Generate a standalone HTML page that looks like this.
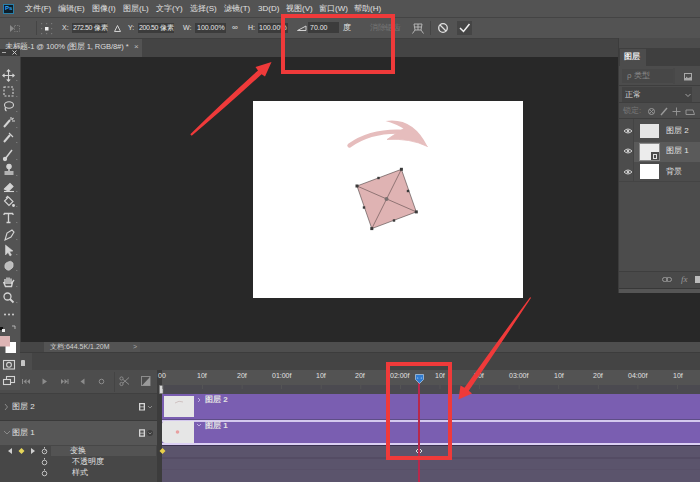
<!DOCTYPE html>
<html><head><meta charset="utf-8">
<style>
*{margin:0;padding:0;box-sizing:border-box}
html,body{width:700px;height:482px;overflow:hidden;background:#282828;font-family:"Liberation Sans",sans-serif;color:#d8d8d8}
.a{position:absolute}
.t{position:absolute;white-space:nowrap;font-size:8px;line-height:10px;color:#e2e2e2}
.c{display:inline-block;width:1em;text-align:center}
svg{position:absolute;left:0;top:0;overflow:visible}
</style></head><body>
<!-- menu bar -->
<div class="a" style="left:0;top:0;width:700px;height:17px;background:#535353"></div>
<div class="a" style="left:0;top:17px;width:700px;height:1px;background:#444"></div>
<div class="a" style="left:3px;top:4px;width:11px;height:10px;background:#0c1e2a;border:1px solid #2a7fa8"></div>
<div class="t" style="left:5px;top:4px;font-size:6px;line-height:8px;color:#31a8ff;font-weight:bold">Ps</div>
<div class="t" style="left:25px;top:4px"><span class="c">文</span><span class="c">件</span>(F)</div>
<div class="t" style="left:58px;top:4px"><span class="c">编</span><span class="c">辑</span>(E)</div>
<div class="t" style="left:92px;top:4px"><span class="c">图</span><span class="c">像</span>(I)</div>
<div class="t" style="left:123px;top:4px"><span class="c">图</span><span class="c">层</span>(L)</div>
<div class="t" style="left:156px;top:4px"><span class="c">文</span><span class="c">字</span>(Y)</div>
<div class="t" style="left:190px;top:4px"><span class="c">选</span><span class="c">择</span>(S)</div>
<div class="t" style="left:224px;top:4px"><span class="c">滤</span><span class="c">镜</span>(T)</div>
<div class="t" style="left:258px;top:4px">3D(D)</div>
<div class="t" style="left:286px;top:4px"><span class="c">视</span><span class="c">图</span>(V)</div>
<div class="t" style="left:319px;top:4px"><span class="c">窗</span><span class="c">口</span>(W)</div>
<div class="t" style="left:354px;top:4px"><span class="c">帮</span><span class="c">助</span>(H)</div>
<!-- options bar -->
<div class="a" style="left:0;top:18px;width:700px;height:20px;background:#535353"></div>
<div class="a" style="left:0;top:38px;width:700px;height:1px;background:#3f3f3f"></div>
<div class="a" style="left:36px;top:21px;width:1px;height:14px;background:#454545"></div>
<svg width="700" height="482"><path d="M10,25 L14,28.5 L10,32 Z" fill="#8a8a8a"/><rect x="14.5" y="25.5" width="5" height="6" fill="none" stroke="#777" stroke-width="1" stroke-dasharray="1.5 1"/></svg>
<svg width="700" height="482"><g fill="#7a7a7a"><rect x="41" y="23" width="1.2" height="1.2"/><rect x="46" y="23" width="1.2" height="1.2"/><rect x="51" y="23" width="1.2" height="1.2"/><rect x="41" y="28" width="1.2" height="1.2"/><rect x="51" y="28" width="1.2" height="1.2"/><rect x="41" y="33" width="1.2" height="1.2"/><rect x="46" y="33" width="1.2" height="1.2"/><rect x="51" y="33" width="1.2" height="1.2"/></g><rect x="45" y="27" width="3.5" height="3.5" fill="#eeeeee"/></svg>
<div class="t" style="left:62px;top:23px;font-size:7px">X:</div>
<div class="a" style="left:72px;top:23px;width:35px;height:10px;background:#3c3c3c"></div>
<div class="t" style="left:73px;top:23px;color:#e8e8e8;font-size:7px;letter-spacing:-0.4px">272.50 <span class="c">像</span><span class="c">素</span></div>
<svg width="700" height="482"><path d="M114.5,31.5 L117.5,25.5 L120.5,31.5 Z" fill="none" stroke="#cfcfcf" stroke-width="1"/></svg>
<div class="t" style="left:128px;top:23px;font-size:7px">Y:</div>
<div class="a" style="left:138px;top:23px;width:36px;height:10px;background:#3c3c3c"></div>
<div class="t" style="left:139px;top:23px;color:#e8e8e8;font-size:7px;letter-spacing:-0.4px">200.50 <span class="c">像</span><span class="c">素</span></div>
<div class="t" style="left:183px;top:23px;font-size:7px">W:</div>
<div class="a" style="left:195px;top:23px;width:31px;height:10px;background:#3c3c3c"></div>
<div class="t" style="left:197px;top:23px;color:#e8e8e8;font-size:7px">100.00%</div>
<div class="t" style="left:232px;top:23px">∞</div>
<div class="t" style="left:248px;top:23px;font-size:7px">H:</div>
<div class="a" style="left:258px;top:23px;width:30px;height:10px;background:#3c3c3c"></div>
<div class="t" style="left:259px;top:23px;color:#e8e8e8;font-size:7px">100.00%</div>
<div class="a" style="left:308px;top:22px;width:31px;height:11px;background:#3c3c3c"></div>
<div class="t" style="left:310px;top:23px;color:#e8e8e8;font-size:7px">70.00</div>
<div class="t" style="left:343px;top:23px"><span class="c">度</span></div>
<div class="t" style="left:370px;top:23px;color:#737373;font-size:7.5px;letter-spacing:0.3px"><span class="c">消</span><span class="c">除</span><span class="c">锯</span><span class="c">齿</span></div>
<div class="a" style="left:430px;top:21px;width:1px;height:14px;background:#454545"></div>
<div class="a" style="left:457px;top:21px;width:15px;height:14px;background:#454545"></div>
<svg width="700" height="482">
  <path d="M297.5,30.5 L306,30.5 L306,26 Z" fill="none" stroke="#d0d0d0" stroke-width="1"/>
  <path d="M414,24 h8 l-1,6 h-6 z M414.5,27 h7 M418,24 v6 M415,30 l-2.5,3.5 M421,30 l2.5,3.5" fill="none" stroke="#bdbdbd" stroke-width="0.9"/>
  <circle cx="443" cy="28" r="4.3" fill="none" stroke="#e0e0e0" stroke-width="1.3"/>
  <path d="M440,25 L446,31" stroke="#e0e0e0" stroke-width="1.3"/>
  <path d="M460,28 L463.5,31.5 L469.5,24" fill="none" stroke="#f0f0f0" stroke-width="1.5"/>
</svg>
<!-- tab bar -->
<div class="a" style="left:0;top:39px;width:700px;height:18px;background:#444444"></div>
<div class="a" style="left:0;top:39px;width:142px;height:18px;background:#535353"></div>
<div class="t" style="left:5px;top:42px;color:#dcdcdc;font-size:7.6px;letter-spacing:-0.1px"><span class="c">未</span><span class="c">标</span><span class="c">题</span>-1 @ 100% (<span class="c">图</span><span class="c">层</span> 1, RGB/8#) *</div>
<div class="t" style="left:134px;top:42px;color:#bdbdbd">×</div>
<!-- toolbar -->
<div class="a" style="left:0;top:49px;width:20px;height:7px;background:#3a3a3a"></div>
<svg width="700" height="482"><path d="M2,52.5 h4" stroke="#aaa" stroke-width="1"/><path d="M12.5,50.5 l4,4 M16.5,50.5 l-4,4" stroke="#c8c8c8" stroke-width="1"/></svg>
<div class="a" style="left:0;top:56px;width:20px;height:334px;background:#535353"></div>
<div class="a" style="left:20px;top:57px;width:1px;height:334px;background:#3e3e3e"></div>
<svg width="700" height="482">
 <g fill="none" stroke="#d4d4d4" stroke-width="1.1">
  <!-- move -->
  <path d="M8.5,70 v11 M3,75.5 h11"/>
  <path d="M6.8,71.6 L8.5,69.8 L10.2,71.6 M6.8,79.4 L8.5,81.2 L10.2,79.4 M4.6,73.8 L2.8,75.5 L4.6,77.2 M12.4,73.8 L14.2,75.5 L12.4,77.2"/>
  <!-- marquee -->
  <rect x="4" y="87" width="9" height="9" stroke-dasharray="2 1.5"/>
  <!-- lasso -->
  <ellipse cx="9" cy="105" rx="4.5" ry="3.2"/>
  <path d="M5.5,107 q-1,3 1,4"/>
  <!-- quick select -->
  <path d="M4,127 L10,120" stroke-width="2"/>
  <path d="M11,117 v3 M12,121 h3 M13.5,118 l-1.5,1.5"/>
  <!-- eyedropper -->
  <path d="M4,142 L10,135" stroke-width="2"/>
  <path d="M9,133 L13,137"/>
  <!-- brush -->
  <path d="M5,159 L12,150" stroke-width="1.5"/>
  <circle cx="5" cy="159" r="1.6" fill="#d4d4d4"/>
  <!-- stamp -->
  <circle cx="9" cy="166.5" r="2.2" fill="#d4d4d4"/>
  <path d="M9,168 v3 M4.5,172 h9 M4.5,174 h9" stroke-width="1.5"/>
  <!-- eraser -->
  <path d="M4.5,189 L10,183.5 L13,186.5 L8.5,191 Z" fill="#d4d4d4"/>
  <path d="M4,191.5 h10"/>
  <!-- bucket -->
  <path d="M4.5,201 L8.5,197 L13,201.5 L9,205.5 Z"/>
  <path d="M6,198 l2,-2" />
  <circle cx="13.5" cy="205.5" r="0.9" fill="#d4d4d4"/>
  <!-- T -->
  <path d="M4,213.5 h9 M8.5,213.5 v9 M6.5,222.5 h4 M4,213.5 v1.5 M13,213.5 v1.5" stroke-width="1.3"/>
  <!-- pen -->
  <path d="M5,240 L7,233 L12,230 L14,232 L11,237 Z"/>
  <!-- path select arrow -->
  <path d="M5.5,245 L5.5,255 L8,252.5 L10,256 L11.5,255 L9.5,251.5 L13,251 Z" fill="#d4d4d4" stroke-width="0.5"/>
  <!-- custom shape -->
  <path d="M5,268 Q4,263 8,262 Q11,260 13,263 Q14,268 11,269 Q8,272 5,268 Z" fill="#bdbdbd" stroke-width="0.6"/>
  <!-- hand -->
  <path d="M5,284 L5,279 M7,284 L7,277.5 M9,284 L9,277.5 M11,284 L11,278.5 M3.5,282 L5.5,286.5 L11.5,286.5 L12.5,282 L14,280" stroke-width="1.4"/>
  <!-- zoom -->
  <circle cx="7.5" cy="296.5" r="3.5" stroke-width="1.3"/>
  <path d="M10,299 L13.5,302.5" stroke-width="1.8"/>
  <!-- quick mask -->
  <rect x="3.5" y="360.5" width="11" height="8.5"/>
  <circle cx="9" cy="364.8" r="2.4"/>
  <!-- screen mode -->
  <rect x="6.5" y="376.5" width="8" height="6"/>
  <rect x="3.5" y="379.5" width="7" height="5" fill="#535353"/>
 </g>
 <g fill="#d4d4d4">
  <circle cx="5" cy="314.5" r="1"/><circle cx="9" cy="314.5" r="1"/><circle cx="13" cy="314.5" r="1"/>
  <rect x="0" y="327" width="3" height="3" fill="#111"/>
  <rect x="2" y="329" width="3" height="3" fill="#eee"/>
  <path d="M12,326 l3,0 l0,3" fill="none" stroke="#ccc" stroke-width="0.8"/>
  <rect x="5.5" y="342" width="10.5" height="11" fill="#ffffff"/>
  <rect x="0" y="336" width="10" height="10.5" fill="#ddb5b5"/>
 </g>
 <g fill="#9a9a9a">
  <path d="M16,80 l1.2,0 l0,1.2 z M16,96 l1.2,0 l0,1.2 z M16,111 l1.2,0 l0,1.2 z M16,127 l1.2,0 l0,1.2 z M16,142 l1.2,0 l0,1.2 z M16,159 l1.2,0 l0,1.2 z M16,175 l1.2,0 l0,1.2 z M16,191 l1.2,0 l0,1.2 z M16,206 l1.2,0 l0,1.2 z M16,222 l1.2,0 l0,1.2 z M16,239 l1.2,0 l0,1.2 z M16,254 l1.2,0 l0,1.2 z M16,270 l1.2,0 l0,1.2 z M16,286 l1.2,0 l0,1.2 z M16,302 l1.2,0 l0,1.2 z"/>
 </g>
</svg>
<!-- canvas -->
<div class="a" style="left:253px;top:101px;width:270px;height:197px;background:#ffffff"></div>
<svg width="700" height="482">
  <path d="M349.5,145.5 Q372,129.5 406,132" fill="none" stroke="#e6bdbd" stroke-width="4.4" stroke-linecap="round"/>
  <path d="M385.5,121 Q413,117 427.5,146.5 Q405.5,126.2 385.5,121 Z" fill="#e6bdbd"/><path d="M387,139.5 L406,127 L427.5,146.5 Q410,138 387,139.5 Z" fill="#e6bdbd" stroke="#e6bdbd" stroke-width="0.8" stroke-linejoin="round"/>
  <path d="M401.4,169.3 L416.3,211.9 L371.8,228.6 L357,186 Z" fill="#dfb3b3" stroke="#4a4040" stroke-width="0.6"/>
  <path d="M401.4,169.3 L371.8,228.6 M357,186 L416.3,211.9" stroke="#5a4a4a" stroke-width="0.6"/>
  <circle cx="386.5" cy="199" r="2" fill="#7a7070"/>
  <g fill="#3a3a3a">
    <rect x="399.9" y="167.8" width="3" height="3"/>
    <rect x="414.8" y="210.4" width="3" height="3"/>
    <rect x="370.3" y="227.1" width="3" height="3"/>
    <rect x="355.5" y="184.5" width="3" height="3"/>
    <rect x="377.3" y="176.8" width="2.4" height="2.4"/>
    <rect x="406.8" y="189.8" width="2.4" height="2.4"/>
    <rect x="392.8" y="219.3" width="2.4" height="2.4"/>
    <rect x="362.8" y="206.3" width="2.4" height="2.4"/>
  </g>
</svg>
<!-- layers panel column -->
<div class="a" style="left:618px;top:38px;width:82px;height:255px;background:#4c4c4c"></div>
<div class="a" style="left:618px;top:38px;width:1px;height:255px;background:#3c3c3c"></div>
<div class="a" style="left:619px;top:48px;width:81px;height:18px;background:#3f3f3f"></div>
<div class="a" style="left:620px;top:49px;width:26px;height:17px;background:#4c4c4c"></div>
<div class="t" style="left:624px;top:52px;color:#eeeeee;font-weight:bold"><span class="c">图</span><span class="c">层</span></div>
<div class="a" style="left:622px;top:69px;width:51px;height:14px;background:#474747"></div>
<div class="t" style="left:627px;top:71px;color:#8a8a8a">ρ <span class="c">类</span><span class="c">型</span></div>
<div class="a" style="left:619px;top:85px;width:81px;height:1px;background:#3e3e3e"></div>
<div class="a" style="left:622px;top:87px;width:70px;height:15px;background:#424242"></div>
<div class="t" style="left:625px;top:90px;color:#d8d8d8"><span class="c">正</span><span class="c">常</span></div>
<svg width="700" height="482"><path d="M685.5,94 l2.5,2.5 l2.5,-2.5" fill="none" stroke="#aaa" stroke-width="0.9"/></svg>
<div class="a" style="left:619px;top:102px;width:81px;height:1px;background:#3e3e3e"></div>
<div class="t" style="left:623px;top:106px;color:#777"><span class="c">锁</span><span class="c">定</span>:</div>
<div class="a" style="left:619px;top:118px;width:81px;height:1px;background:#3e3e3e"></div>
<div class="a" style="left:634px;top:142px;width:66px;height:20px;background:#5a5a5a"></div>
<div class="a" style="left:640px;top:124px;width:19px;height:14px;background:#e4e4e4"></div>
<div class="a" style="left:639px;top:143px;width:21px;height:18px;background:#ececec;border:1px solid #8a8a8a"></div>
<div class="a" style="left:651px;top:152px;width:8px;height:8px;background:#4a4a4a"></div>
<div class="a" style="left:653px;top:154px;width:4px;height:5px;border:1px solid #e0e0e0"></div>
<div class="a" style="left:640px;top:164px;width:19px;height:15px;background:#ffffff"></div>
<div class="t" style="left:666px;top:126px"><span class="c">图</span><span class="c">层</span> 2</div>
<div class="t" style="left:666px;top:146px"><span class="c">图</span><span class="c">层</span> 1</div>
<div class="t" style="left:666px;top:167px"><span class="c">背</span><span class="c">景</span></div>
<div class="a" style="left:619px;top:181px;width:81px;height:1px;background:#444"></div>
<div class="a" style="left:633px;top:119px;width:1px;height:62px;background:#444"></div>
<svg width="700" height="482">
 <g fill="none" stroke="#cfcfcf" stroke-width="1">
  <path d="M624,131 Q628,127 632,131 Q628,135 624,131 Z"/>
  <path d="M624,151 Q628,147 632,151 Q628,155 624,151 Z"/>
  <path d="M624,172 Q628,168 632,172 Q628,176 624,172 Z"/>
  <rect x="684.5" y="73.5" width="7" height="6.5" stroke="#a8a8a8"/>
  <path d="M685,78 h6 v2 h-6 z M686,76.5 l2,1.5 l3,-1 v2 h-5 z" fill="#a8a8a8" stroke="none"/>
  <path d="M674,68 v16" stroke="#444"/>
  <path d="M661,115 L667,108" stroke="#9a9a9a" stroke-width="1.4"/>
  <path d="M676.5,107.5 v8 M672.5,111.5 h8" stroke="#9a9a9a" stroke-width="0.9"/>
  <path d="M686,110 h7 l1.5,4.5 h-8.5 z" stroke="#9a9a9a" stroke-width="0.9"/>
  <circle cx="651.5" cy="111.5" r="3" stroke="#9a9a9a"/><path d="M649.5,109.5 l4,4 M653.5,109.5 l-4,4" stroke="#9a9a9a" stroke-width="0.8"/>
 </g>
 <g fill="#cfcfcf"><circle cx="628" cy="131" r="1.3"/><circle cx="628" cy="151" r="1.3"/><circle cx="628" cy="172" r="1.3"/></g>
</svg>
<div class="a" style="left:619px;top:271px;width:81px;height:1px;background:#3e3e3e"></div>
<div class="a" style="left:619px;top:272px;width:81px;height:16px;background:#494949"></div>
<div class="a" style="left:619px;top:288px;width:81px;height:1px;background:#383838"></div>
<div class="a" style="left:619px;top:289px;width:81px;height:4px;background:#555"></div>
<svg width="700" height="482"><rect x="662.5" y="277.5" width="5" height="4" rx="2" fill="none" stroke="#9a9a9a" stroke-width="1"/><rect x="666.5" y="277.5" width="5" height="4" rx="2" fill="none" stroke="#9a9a9a" stroke-width="1"/></svg>
<div class="t" style="left:681px;top:274px;color:#9a9a9a;font-style:italic;font-family:'Liberation Serif',serif;font-size:9px">fx</div>
<div class="a" style="left:695px;top:276px;width:5px;height:7px;background:#bbb"></div>
<!-- status bar -->
<div class="a" style="left:20px;top:342px;width:680px;height:10px;background:#4e4e4e"></div>
<div class="a" style="left:20px;top:342px;width:24px;height:10px;background:#464646"></div>
<div class="a" style="left:44px;top:342px;width:96px;height:10px;background:#535353"></div>
<div class="t" style="left:50px;top:342px;font-size:7px;color:#d0d0d0"><span class="c">文</span><span class="c">档</span>:644.5K/1.20M</div>
<div class="t" style="left:133px;top:342px;font-size:7px;color:#aaa">&gt;</div>
<div class="a" style="left:20px;top:352px;width:680px;height:1px;background:#3c3c3c"></div>
<!-- timeline tab bar -->
<div class="a" style="left:20px;top:353px;width:680px;height:17px;background:#444444"></div>
<div class="a" style="left:20px;top:353px;width:12px;height:17px;background:#4c4c4c"></div>
<div class="a" style="left:21px;top:360px;width:4px;height:6px;background:#c4c4c4;border-radius:1px 1px 0 0"></div>
<!-- controls row -->
<div class="a" style="left:20px;top:370px;width:137px;height:23px;background:#4d4d4d"></div>
<div class="a" style="left:114px;top:372px;width:1px;height:20px;background:#444"></div>
<!-- gutter -->
<div class="a" style="left:157px;top:370px;width:5px;height:112px;background:#3c3c3c"></div>
<!-- ruler -->
<div class="a" style="left:162px;top:370px;width:538px;height:15px;background:#535353"></div>
<div class="a" style="left:162px;top:385px;width:538px;height:9px;background:#4b4a50"></div>
<!-- layer rows -->
<div class="a" style="left:0;top:390px;width:20px;height:3px;background:#4c4c4c"></div>
<div class="a" style="left:0;top:393px;width:157px;height:1px;background:#404040"></div>
<div class="a" style="left:0;top:394px;width:157px;height:26px;background:#474747"></div>
<div class="a" style="left:0;top:420px;width:157px;height:1px;background:#3a3a3a"></div>
<div class="a" style="left:0;top:421px;width:157px;height:24px;background:#565656"></div>
<div class="a" style="left:0;top:445px;width:157px;height:37px;background:#474747"></div>
<div class="a" style="left:51px;top:446px;width:105px;height:10px;background:#535353"></div>
<svg width="700" height="482">
 <g fill="#8c8c8c">
  <path d="M23,379 v5 h-1 v-5 z M26.5,379 l-3,2.5 l3,2.5 z M30,379 l-3,2.5 l3,2.5 z"/>
  <path d="M42.5,378.5 l4.5,3 l-4.5,3 z"/>
  <path d="M61,379 l3,2.5 l-3,2.5 z M64.5,379 l3,2.5 l-3,2.5 z M67.5,379 h1 v5 h-1 z"/>
  <path d="M84.5,378.5 l-4,3 l4,3 z"/>
 </g>
 <g fill="none" stroke="#8c8c8c" stroke-width="1">
  <circle cx="101.5" cy="381.5" r="2.3"/>
  <circle cx="121.5" cy="378.5" r="1.6"/><circle cx="121.5" cy="384" r="1.6"/>
  <path d="M123,379.5 L129,384.5 M123,383 L129,377.5"/>
  <rect x="141.5" y="376.5" width="8.5" height="9"/>
 </g>
 <path d="M142,385.5 L150,377 L150,385.5 Z" fill="#9a9a9a"/>
 <g fill="none" stroke="#8a8a8a" stroke-width="1">
  <path d="M5,404 l2.5,3 l-2.5,3"/>
  <path d="M4,431 l3,3 l3,-3"/>
  <path d="M148,406 l2,2 l2,-2"/>
 </g>
 <g fill="#d6d6d6">
  <path d="M139,403 h6 v7.5 h-6 z M140.3,404.3 v2.2 h3.4 v-2.2 z M140.3,407.2 v2.2 h3.4 v-2.2 z" fill-rule="evenodd"/>
  <path d="M139,429.2 h6 v7.5 h-6 z M140.3,430.5 v2.2 h3.4 v-2.2 z M140.3,433.4 v2.2 h3.4 v-2.2 z" fill-rule="evenodd"/>
 </g>
 <circle cx="150" cy="433" r="3" fill="#3e3e3e"/><path d="M148.5,432.5 l1.5,1.5 l1.5,-1.5" fill="none" stroke="#9a9a9a" stroke-width="0.8"/>
 <path d="M8,451 l4,-3 v6 z M35,451 l-4,-3 v6 z" fill="#cfcfcf"/>
 <path d="M21.5,448 l3,3 l-3,3 l-3,-3 z" fill="#e5d55a"/>
 <g fill="none" stroke="#cfcfcf" stroke-width="0.9">
  <circle cx="44.5" cy="451.5" r="2.3"/><path d="M44.5,448.5 v-1.5 M44.5,451.5 l1,-1"/>
  <circle cx="44.5" cy="462.5" r="2.3"/><path d="M44.5,459.5 v-1.5"/>
  <circle cx="44.5" cy="473.5" r="2.3"/><path d="M44.5,470.5 v-1.5"/>
 </g>
</svg>
<div class="t" style="left:12px;top:402px"><span class="c">图</span><span class="c">层</span> 2</div>
<div class="t" style="left:12px;top:428px"><span class="c">图</span><span class="c">层</span> 1</div>
<div class="t" style="left:70px;top:446px"><span class="c">变</span><span class="c">换</span></div>
<div class="t" style="left:72px;top:457px"><span class="c">不</span><span class="c">透</span><span class="c">明</span><span class="c">度</span></div>
<div class="t" style="left:72px;top:468px"><span class="c">样</span><span class="c">式</span></div>
<!-- tracks -->
<div class="a" style="left:162px;top:394px;width:538px;height:25px;background:#7a5eb1"></div>
<div class="a" style="left:162px;top:419px;width:538px;height:1px;background:#5e4e86"></div>
<div class="a" style="left:162px;top:420px;width:538px;height:2px;background:#d4c8ee"></div>
<div class="a" style="left:162px;top:422px;width:538px;height:21px;background:#7a5eb1"></div>
<div class="a" style="left:162px;top:443px;width:538px;height:2px;background:#dcd0f4"></div>
<div class="a" style="left:162px;top:445px;width:538px;height:37px;background:#5b546c"></div>
<div class="a" style="left:164px;top:396px;width:30px;height:21px;background:#e6e6e6"></div>
<div class="a" style="left:162px;top:421px;width:32px;height:22px;background:#e6e6e6;border-radius:3px 0 0 3px"></div>
<div class="a" style="left:162px;top:445px;width:538px;height:1px;background:#3a3150"></div>
<div class="a" style="left:162px;top:457px;width:538px;height:2px;background:#544c64"></div>
<div class="a" style="left:162px;top:469px;width:538px;height:1px;background:#585068"></div>
<svg width="700" height="482">
 <path d="M162.5,448 l3,3 l-3,3 l-3,-3 z" fill="#e8cf4a"/>
 <path d="M419,448 l3,3 l-3,3 l-3,-3 z" fill="none" stroke="#e0e0e0" stroke-width="1"/>
 <rect x="159.5" y="385.5" width="3.5" height="8" fill="#d8d8d8" stroke="#777" stroke-width="0.6"/>
 <path d="M183,402 q-4,-2 -8,1" fill="none" stroke="#c9b9b9" stroke-width="0.8"/>
 <circle cx="177.5" cy="432" r="1.8" fill="#e8a0a0"/>
 <path d="M198,398 l2,2 l-2,2" fill="none" stroke="#c8b8e8" stroke-width="0.9"/>
 <path d="M197,424 l2,2 l2,-2" fill="none" stroke="#c8b8e8" stroke-width="0.9"/>
 <g fill="#575757"><rect x="162.5" y="385" width="0.8" height="4"/><rect x="202.1" y="385" width="0.8" height="4"/><rect x="241.7" y="385" width="0.8" height="4"/><rect x="281.2" y="385" width="0.8" height="4"/><rect x="320.8" y="385" width="0.8" height="4"/><rect x="360.4" y="385" width="0.8" height="4"/><rect x="400.0" y="385" width="0.8" height="4"/><rect x="439.6" y="385" width="0.8" height="4"/><rect x="479.1" y="385" width="0.8" height="4"/><rect x="518.7" y="385" width="0.8" height="4"/><rect x="558.3" y="385" width="0.8" height="4"/><rect x="597.9" y="385" width="0.8" height="4"/><rect x="637.5" y="385" width="0.8" height="4"/><rect x="677.0" y="385" width="0.8" height="4"/></g>
</svg>
<div class="t" style="left:205px;top:395px;font-weight:bold"><span class="c">图</span><span class="c">层</span> 2</div>
<div class="t" style="left:205px;top:421px;font-weight:bold"><span class="c">图</span><span class="c">层</span> 1</div>
<!-- ruler labels -->
<div class="t" style="left:158px;top:371px;font-size:7px">00</div>
<div class="t" style="left:197px;top:371px;font-size:7px">10f</div>
<div class="t" style="left:237px;top:371px;font-size:7px">20f</div>
<div class="t" style="left:272px;top:371px;font-size:7px">01:00f</div>
<div class="t" style="left:316px;top:371px;font-size:7px">10f</div>
<div class="t" style="left:355px;top:371px;font-size:7px">20f</div>
<div class="t" style="left:390px;top:371px;font-size:7px">02:00f</div>
<div class="t" style="left:435px;top:371px;font-size:7px">10f</div>
<div class="t" style="left:474px;top:371px;font-size:7px">20f</div>
<div class="t" style="left:509px;top:371px;font-size:7px">03:00f</div>
<div class="t" style="left:554px;top:371px;font-size:7px">10f</div>
<div class="t" style="left:593px;top:371px;font-size:7px">20f</div>
<div class="t" style="left:628px;top:371px;font-size:7px">04:00f</div>
<div class="t" style="left:673px;top:371px;font-size:7px">10f</div>
<!-- playhead -->
<div class="a" style="left:418px;top:383px;width:1.6px;height:99px;background:#b8284c"></div>
<svg width="700" height="482"><path d="M415.5,374.5 h8 v5 l-4,4 l-4,-4 z" fill="#2f7bd0" stroke="#b8d0ea" stroke-width="0.7"/><circle cx="417.7" cy="378" r="0.6" fill="#cfe3ff"/><circle cx="421.3" cy="378" r="0.6" fill="#cfe3ff"/></svg>
<!-- annotations -->
<svg width="700" height="482">
  <rect x="283" y="16" width="110" height="56" fill="none" stroke="#ef3a3a" stroke-width="4"/>
  <rect x="388" y="364" width="62" height="94" fill="none" stroke="#ef3a3a" stroke-width="4"/>
  <path d="M190.3,134.3 Q222,103 258,70.5 L255.5,67 L271.5,62 L265,76.5 L261.6,74.2 Q226,107 191.7,135.7 Z" fill="#ef3a3a"/>
  <path d="M530.1,297.2 Q497,342 464.5,387.8 L460.5,385.5 L458.5,399.5 L472,393.5 L468.8,390.8 Q500,345 531.1,297.8 Z" fill="#ef3a3a"/>
</svg>
</body></html>
